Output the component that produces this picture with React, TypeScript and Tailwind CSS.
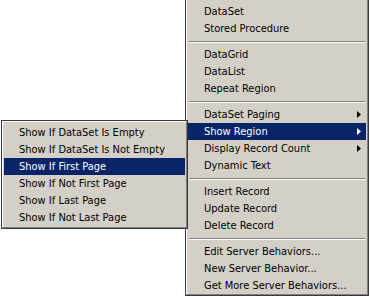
import React from "react";

type Entry =
  | { kind: "item"; label: string; sub?: boolean; active?: boolean }
  | { kind: "sep" };

const mainItems: Entry[] = [
  { kind: "item", label: "DataSet" },
  { kind: "item", label: "Stored Procedure" },
  { kind: "sep" },
  { kind: "item", label: "DataGrid" },
  { kind: "item", label: "DataList" },
  { kind: "item", label: "Repeat Region" },
  { kind: "sep" },
  { kind: "item", label: "DataSet Paging", sub: true },
  { kind: "item", label: "Show Region", sub: true, active: true },
  { kind: "item", label: "Display Record Count", sub: true },
  { kind: "item", label: "Dynamic Text" },
  { kind: "sep" },
  { kind: "item", label: "Insert Record" },
  { kind: "item", label: "Update Record" },
  { kind: "item", label: "Delete Record" },
  { kind: "sep" },
  { kind: "item", label: "Edit Server Behaviors..." },
  { kind: "item", label: "New Server Behavior..." },
  { kind: "item", label: "Get More Server Behaviors..." },
];

const subItems = [
  "Show If DataSet Is Empty",
  "Show If DataSet Is Not Empty",
  "Show If First Page",
  "Show If Not First Page",
  "Show If Last Page",
  "Show If Not Last Page",
];

const font = { fontFamily: '"DejaVu Sans Condensed", "Liberation Sans", sans-serif' };

const Arrow = ({ white }: { white?: boolean }) => (
  <svg width="4" height="7" viewBox="0 0 4 7" className="shrink-0">
    <path d="M0 0 L4 3.5 L0 7 Z" fill={white ? "#ffffff" : "#000000"} />
  </svg>
);

const Row = ({ label, sub, active, indent }: { label: string; sub?: boolean; active?: boolean; indent: string }) => (
  <div
    className={`flex h-[17px] items-center justify-between pr-[5px] text-[11px] leading-none ${indent} ${
      active ? "bg-[#0a246a] text-white" : "text-black"
    }`}
  >
    <span className="whitespace-nowrap">{label}</span>
    {sub && <Arrow white={active} />}
  </div>
);

const Separator = () => (
  <div className="flex h-[9px] items-center px-[1px]">
    <div className="h-[2px] w-full border-t border-b border-t-[#808080] border-b-white" />
  </div>
);

export default function App() {
  return (
    <div className="relative h-[297px] w-[370px] overflow-hidden bg-white" style={font}>
      <div className="ml-[185px] w-[184px] border-x border-b border-[#3a3a3a] bg-[#d4d0c8]">
        <div className="border-l border-r border-b border-l-white border-r-[#808080] border-b-[#808080] px-[1px] pt-[3px]">
          {mainItems.map((e, i) =>
            e.kind === "sep" ? (
              <Separator key={i} />
            ) : (
              <Row key={i} label={e.label} sub={e.sub} active={e.active} indent="pl-[16px]" />
            )
          )}
        </div>
      </div>

      <div className="absolute left-[1px] top-[120px] w-[187px] border border-[#3a3a3a] bg-[#d4d0c8]">
        <div className="border border-t-white border-l-white border-r-[#808080] border-b-[#808080] px-[1px] pt-[2px] pb-[1px]">
          {subItems.map((s, i) => (
            <Row key={i} label={s} active={i === 2} indent="pl-[15px]" />
          ))}
        </div>
      </div>
    </div>
  );
}
